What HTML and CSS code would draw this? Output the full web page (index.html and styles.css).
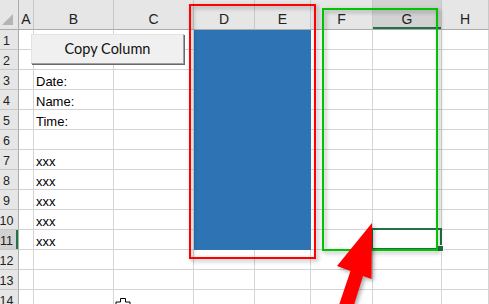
FILE: index.html
```html
<!DOCTYPE html>
<html>
<head>
  <title>Copy Column</title>
  <link rel="stylesheet" href="styles.css">
</head>
<body>
  <div class="screen">
    <div class="sheet">
      <div class="h corner"><svg width="11" height="11" viewBox="0 0 11 11"><polygon points="0,11 11,11 11,0" fill="#b4b4b4"/></svg></div>
      <div class="h">A</div><div class="h">B</div><div class="h">C</div><div class="h">D</div><div class="h">E</div><div class="h">F</div><div class="h sel">G</div><div class="h">H</div>

      <div class="r">1</div><div class="c"></div><div class="c"></div><div class="c"></div><div class="c fill"></div><div class="c fill"></div><div class="c"></div><div class="c"></div><div class="c"></div>
      <div class="r">2</div><div class="c"></div><div class="c"></div><div class="c"></div><div class="c fill"></div><div class="c fill"></div><div class="c"></div><div class="c"></div><div class="c"></div>
      <div class="r">3</div><div class="c"></div><div class="c">Date:</div><div class="c"></div><div class="c fill"></div><div class="c fill"></div><div class="c"></div><div class="c"></div><div class="c"></div>
      <div class="r">4</div><div class="c"></div><div class="c">Name:</div><div class="c"></div><div class="c fill"></div><div class="c fill"></div><div class="c"></div><div class="c"></div><div class="c"></div>
      <div class="r">5</div><div class="c"></div><div class="c">Time:</div><div class="c"></div><div class="c fill"></div><div class="c fill"></div><div class="c"></div><div class="c"></div><div class="c"></div>
      <div class="r">6</div><div class="c"></div><div class="c"></div><div class="c"></div><div class="c fill"></div><div class="c fill"></div><div class="c"></div><div class="c"></div><div class="c"></div>
      <div class="r">7</div><div class="c"></div><div class="c">xxx</div><div class="c"></div><div class="c fill"></div><div class="c fill"></div><div class="c"></div><div class="c"></div><div class="c"></div>
      <div class="r">8</div><div class="c"></div><div class="c">xxx</div><div class="c"></div><div class="c fill"></div><div class="c fill"></div><div class="c"></div><div class="c"></div><div class="c"></div>
      <div class="r">9</div><div class="c"></div><div class="c">xxx</div><div class="c"></div><div class="c fill"></div><div class="c fill"></div><div class="c"></div><div class="c"></div><div class="c"></div>
      <div class="r">10</div><div class="c"></div><div class="c">xxx</div><div class="c"></div><div class="c fill"></div><div class="c fill"></div><div class="c"></div><div class="c"></div><div class="c"></div>
      <div class="r sel">11</div><div class="c"></div><div class="c">xxx</div><div class="c"></div><div class="c fill"></div><div class="c fill"></div><div class="c"></div><div class="c"></div><div class="c"></div>
      <div class="r">12</div><div class="c"></div><div class="c"></div><div class="c"></div><div class="c"></div><div class="c"></div><div class="c"></div><div class="c"></div><div class="c"></div>
      <div class="r">13</div><div class="c"></div><div class="c"></div><div class="c"></div><div class="c"></div><div class="c"></div><div class="c"></div><div class="c"></div><div class="c"></div>
      <div class="r">14</div><div class="c"></div><div class="c"></div><div class="c"></div><div class="c"></div><div class="c"></div><div class="c"></div><div class="c"></div><div class="c"></div>
    </div>

    <!-- form button sitting over B1:C2 -->
    <button class="copy-btn">Copy Column</button>

    <!-- active cell G11 -->
    <div class="active-cell"><span class="handle"></span></div>

    <!-- annotation boxes -->
    <div class="mark mark-red"></div>
    <div class="mark mark-green"></div>

    <svg class="overlay" width="489" height="304" viewBox="0 0 489 304">
      <polygon class="arrow" points="372,223 337,266 350.5,271 338,308 353,308 363,276 371.5,279" fill="#ff0000"/>
      <path d="M120.5 298.5 h5 v3.5 h4.5 v6 h-14 v-6 h4.5 z" fill="#fff" stroke="#000" stroke-width="1"/>
    </svg>
  </div>
</body>
</html>
```

FILE: styles.css
```css
:root {
  --grid: #d4d4d4; /* cell gridlines */
  --hdr: #e6e6e6; /* header background */
  --hdr-line: #ababab;
  --sel: #217346; /* excel green */
  --fill: #2e73b3;
}

html, body {
  margin: 0;
  padding: 0;
  overflow: hidden;
  background: #fff;
}

.screen {
  position: relative;
  width: 489px;
  height: 304px;
  overflow: hidden;
  font-family: "Liberation Sans", Arial, sans-serif;
}

.sheet {
  display: grid;
  grid-template-columns: 19px 15px 80px 80px 61px 56px 62px 69px 1fr;
  grid-template-rows: 30px;
  grid-auto-rows: 20px;
}

.sheet > div {
  box-sizing: border-box;
  border-right: 1px solid var(--grid);
  border-bottom: 1px solid var(--grid);
  display: flex;
  align-items: flex-end;
  white-space: nowrap;
  overflow: hidden;
}

.h {
  background-color: var(--hdr);
  justify-content: center;
  font-size: 14px;
  line-height: 16px;
  padding-bottom: 2px;
  color: #222;
  border-right-color: #c8c8c8 !important;
  border-bottom-color: var(--hdr-line) !important;
}

.h.corner {
  justify-content: flex-start;
  padding: 0 0 4px 2px;
  border-right-color: var(--hdr-line) !important;
}

.h.corner svg {
  display: block;
}

.h.sel {
  background-color: #d2d2d2;
  box-shadow: inset 0 -2px 0 var(--sel);
}

.r {
  background-color: var(--hdr);
  justify-content: center;
  padding-right: 5px;
  font-size: 12.5px;
  line-height: 15px;
  color: #222;
  border-right-color: var(--hdr-line) !important;
  border-bottom-color: #c8c8c8 !important;
}

.r.sel {
  background-color: #d2d2d2;
  box-shadow: inset -2px 0 0 var(--sel);
}

.c {
  font-size: 13px;
  line-height: 15px;
  padding-left: 2px;
  color: #000;
}

.c.fill {
  background-color: var(--fill);
  border-color: var(--fill);
}

.copy-btn {
  position: absolute;
  left: 31px;
  top: 34px;
  width: 153px;
  height: 30px;
  margin: 0;
  padding: 0 0 2px 0;
  background-color: #f0f0f0;
  border: 1px solid #e3e3e3;
  border-right-color: #a0a0a0;
  border-bottom-color: #a0a0a0;
  box-shadow: 1px 1px 0 #696969;
  font-family: Lato, "Liberation Sans", sans-serif;
  font-size: 14.5px;
  color: #111;
}

.active-cell {
  position: absolute;
  left: 371px;
  top: 228px;
  width: 71px;
  height: 22px;
  box-sizing: border-box;
  border: 2px solid var(--sel);
}

.active-cell .handle {
  position: absolute;
  right: -4px;
  bottom: -4px;
  width: 5px;
  height: 5px;
  background-color: var(--sel);
  border: 1px solid #fff;
}

.mark {
  position: absolute;
  box-sizing: border-box;
  border: 2px solid;
  filter: drop-shadow(2px 2px 2px rgba(0, 0, 0, 0.35));
}

.mark-red {
  left: 189px;
  top: 4px;
  width: 127px;
  height: 255px;
  border-color: #ff0000;
}

.mark-green {
  left: 322px;
  top: 8px;
  width: 116px;
  height: 243px;
  border-color: #00c400;
}

.overlay {
  position: absolute;
  left: 0;
  top: 0;
  pointer-events: none;
}

.arrow {
  filter: drop-shadow(2px 2px 2px rgba(0, 0, 0, 0.35));
}
```
